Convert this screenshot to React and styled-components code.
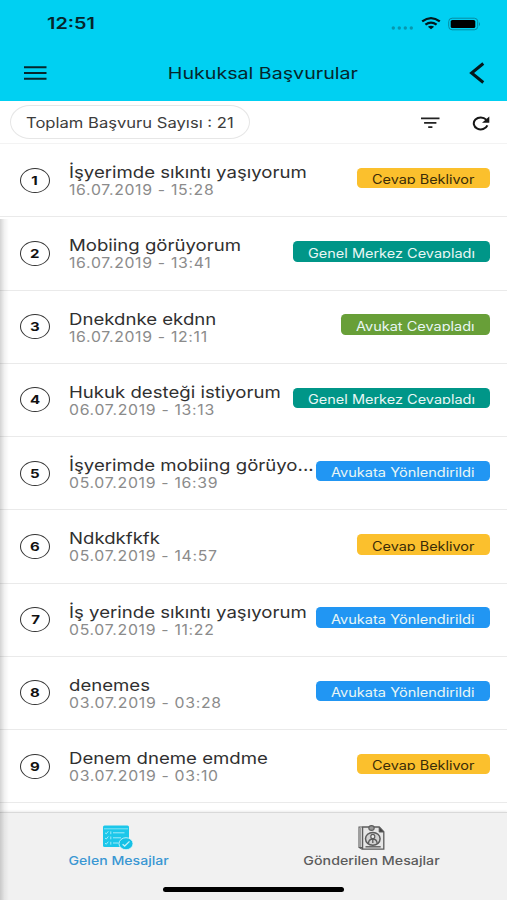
import React from "react";
import styled, { createGlobalStyle } from "styled-components";

const GlobalStyle = createGlobalStyle`
  * {
    box-sizing: border-box;
  }
  body {
    margin: 0;
    background: #ffffff;
    font-family: Inter, "Liberation Sans", sans-serif;
  }
`;

const Screen = styled.div`
  position: relative;
  display: flex;
  flex-direction: column;
  width: 507px;
  height: 900px;
  overflow: hidden;
  background: #ffffff;
`;

const Wide = styled.span`
  display: inline-block;
  white-space: nowrap;
  transform: scaleX(${(props) => props.$x || 1.18});
  transform-origin: ${(props) => props.$origin || "left"} center;
`;

const Top = styled.header`
  flex: none;
  height: 101px;
  background: #00d0f2;
`;

const StatusBar = styled.div`
  display: flex;
  align-items: center;
  justify-content: space-between;
  height: 47px;
  padding: 0 26px 0 46.5px;
`;

const Clock = styled.div`
  font-size: 15.5px;
  font-weight: 600;
  line-height: 20px;
  color: #06262c;
`;

const StatusIcons = styled.div`
  display: flex;
  align-items: center;
`;

const NavBar = styled.div`
  display: grid;
  grid-template-columns: 32px 1fr 38px;
  align-items: center;
  height: 52px;
  padding: 0 0 0 24px;
`;

const NavTitle = styled.h1`
  margin: 0;
  text-align: center;
  font-size: 16.5px;
  font-weight: 400;
  line-height: 20px;
  color: #06262c;
`;

const Toolbar = styled.div`
  flex: none;
  display: flex;
  align-items: center;
  height: 43px;
  padding: 0 17px 0 10px;
  border-bottom: 1px solid #f3f3f3;
`;

const Total = styled.div`
  width: 240px;
  height: 34px;
  margin-right: auto;
  padding-left: 15px;
  border: 1px solid #e6e6e6;
  border-radius: 20px / 17px;
  font-size: 14px;
  line-height: 33px;
  color: #3c3c3c;
`;

const List = styled.main`
  flex: none;
  height: 668px;
  overflow: hidden;
`;

const Row = styled.div`
  display: flex;
  align-items: center;
  height: 73.25px;
  padding: 0 17px 0 20px;
  border-bottom: 1px solid #eaeaea;
`;

const Number = styled.div`
  flex: none;
  width: 30px;
  height: 25px;
  border: 1.5px solid #333333;
  border-radius: 50%;
  text-align: center;
  font-size: 12px;
  font-weight: 700;
  line-height: 23px;
  color: #111111;
`;

const Info = styled.div`
  flex: 1;
  min-width: 0;
  padding-left: 19px;
`;

const Subject = styled.div`
  font-size: 16.5px;
  line-height: 20px;
  color: #303030;
`;

const DateText = styled.div`
  font-size: 14px;
  line-height: 16px;
  letter-spacing: 0.6px;
  color: #8b8b8b;
`;

const Badge = styled.div`
  flex: none;
  width: ${(props) => props.$width}px;
  height: 20.5px;
  margin-bottom: 4px;
  padding: 3.5px 15px 0;
  border-radius: 4.5px;
  background: ${(props) => props.$bg};
  color: ${(props) => props.$color || "#e9f6f5"};
`;

// fixed height cuts the descenders off
const BadgeText = styled.div`
  height: 13px;
  overflow: hidden;
  font-size: 12.5px;
  line-height: 17px;
`;

const TabBar = styled.nav`
  flex: none;
  display: grid;
  grid-template-columns: 1fr 1fr;
  height: 88px;
  border-top: 1px solid #d9d9d9;
  background: #f1f1f1;
  box-shadow: 0 -1px 2px rgba(0, 0, 0, 0.08);
`;

const Tab = styled.div`
  display: flex;
  flex-direction: column;
  align-items: center;
  padding: 12px 17px 0 0;
  font-size: 12px;
  font-weight: 500;
  line-height: 16px;
  color: ${(props) => (props.$active ? "#3a97d3" : "#5c5c5c")};

  svg {
    margin-bottom: 3px;
  }
`;

const HomeIndicator = styled.div`
  position: absolute;
  left: 163px;
  bottom: 8px;
  width: 181px;
  height: 5px;
  border-radius: 3px;
  background: #000000;
`;

const EdgeShadow = styled.div`
  position: absolute;
  top: 219px;
  left: 0;
  bottom: 0;
  width: 9px;
  background: linear-gradient(to right, rgba(0, 0, 0, 0.17), rgba(0, 0, 0, 0.05) 50%, rgba(0, 0, 0, 0));
`;

const STATUS = {
  waiting: { text: "Cevap Bekliyor", width: 133.5, bg: "#fbc02d", color: "#3a2c08", x: 1.155 },
  center: { text: "Genel Merkez Cevapladı", width: 197.5, bg: "#009688", x: 1.16 },
  lawyer: { text: "Avukat Cevapladı", width: 149, bg: "#689f38", x: 1.16 },
  forwarded: { text: "Avukata Yönlendirildi", width: 174, bg: "#2196f3", x: 1.165 },
};

const messages = [
  { title: "İşyerimde sıkıntı yaşıyorum", date: "16.07.2019 - 15:28", status: "waiting" },
  { title: "Mobiing görüyorum", date: "16.07.2019 - 13:41", status: "center" },
  { title: "Dnekdnke ekdnn", date: "16.07.2019 - 12:11", status: "lawyer" },
  { title: "Hukuk desteği istiyorum", date: "06.07.2019 - 13:13", status: "center" },
  { title: "İşyerimde mobiing görüyo...", date: "05.07.2019 - 16:39", status: "forwarded" },
  { title: "Ndkdkfkfk", date: "05.07.2019 - 14:57", status: "waiting" },
  { title: "İş yerinde sıkıntı yaşıyorum", date: "05.07.2019 - 11:22", status: "forwarded" },
  { title: "denemes", date: "03.07.2019 - 03:28", status: "forwarded" },
  { title: "Denem dneme emdme", date: "03.07.2019 - 03:10", status: "waiting" },
];

const SignalIcon = () => (
  <svg width="90" height="16" viewBox="0 0 90 16">
    <g fill="#0797ae">
      <circle cx="2.3" cy="12" r="1.7" />
      <circle cx="8.3" cy="12" r="1.7" />
      <circle cx="14.3" cy="12" r="1.7" />
      <circle cx="20.3" cy="12" r="1.7" />
    </g>
    <g fill="none" stroke="#02181c" strokeWidth="2.3">
      <path d="M31.2 5.4 Q40 -1.2 48.8 5.4" />
      <path d="M34.4 8.6 Q40 4.6 45.6 8.6" />
    </g>
    <path d="M36.9 10.8 Q40 8.8 43.1 10.8 L40 13.3z" fill="#02181c" />
    <rect x="57.7" y="2.2" width="29" height="11.6" rx="3.4" fill="none" stroke="#078ca2" />
    <rect x="59.7" y="4" width="24.6" height="8" rx="1.6" fill="#000" />
    <path d="M88 5.9 Q90 8 88 10.1z" fill="#078ca2" />
  </svg>
);

const MenuIcon = () => (
  <svg width="23" height="14" viewBox="0 0 23 14" stroke="#06262c" strokeWidth="2.1">
    <path d="M0 1.3h22.5M0 7h22.5M0 12.7h22.5" />
  </svg>
);

const BackIcon = () => (
  <svg width="16" height="22" viewBox="0 0 16 22" fill="none" stroke="#04181c" strokeWidth="3">
    <path d="M14.3 1.5 L2.6 11 L14.3 20.5" />
  </svg>
);

const FilterIcon = () => (
  <svg width="19" height="12" viewBox="0 0 19 12" stroke="#222" strokeWidth="1.8">
    <path d="M0 1.4h18.5M3.1 5.8h12.3M7.2 10.2h4.2" />
  </svg>
);

const RefreshIcon = () => (
  <svg width="18" height="15" viewBox="0 0 18 15">
    <path d="M14.2 3.6 A7 6 0 1 0 15.4 9.4" fill="none" stroke="#161616" strokeWidth="2" />
    <path d="M17.3 0.6 V6.8 H10z" fill="#161616" />
  </svg>
);

const InboxIcon = () => (
  <svg width="30" height="25" viewBox="0 0 30 25">
    <rect x="0" y="0.5" width="26" height="21.5" rx="1.5" fill="#1cc7ea" />
    <path d="M1 3.8h24" stroke="#8fe6f6" strokeWidth="0.9" />
    <g stroke="#a4ebf8" fill="none" strokeWidth="1">
      <path d="M2 7.8l1.3 1 2-2.5M2 13l1.3 1 2-2.5M2 18.2l1.3 1 2-2.5" />
      <path d="M7.8 6.4v2.8M7.8 11.5v2.8M7.8 16.8v2.8" />
      <path d="M10 7.8h11.5M10 12.8h8M10 18h5.5" />
    </g>
    <ellipse cx="23" cy="18.7" rx="7" ry="6" fill="#16c1e6" stroke="#e5f7fa" strokeWidth="0.8" />
    <path d="M19.6 19.2l2.1 1.8 4.8-4.6" stroke="#c3f1fa" strokeWidth="1.3" fill="none" />
  </svg>
);

const SentIcon = () => (
  <svg width="27" height="25" viewBox="0 0 27 25" fill="none" stroke="#5c5c5c">
    <path d="M4 2H1v20.5h3M1.2 22.5l3 1.7" strokeWidth="1.1" />
    <path d="M2.6 3v19" stroke="#a0a0a0" strokeWidth="1.5" />
    <path d="M4.6 2h16.6l4.6 4.8v17.4H4.6z" strokeWidth="1.3" fill="#e6e6e6" />
    <path d="M21.2 2v5h4.6z" fill="#444" />
    <ellipse cx="14.8" cy="13.8" rx="7.3" ry="6.4" strokeWidth="1.5" fill="#d2d2d2" />
    <ellipse cx="14.8" cy="11.5" rx="2" ry="2.2" strokeWidth="1.2" fill="#eee" />
    <path d="M10.5 18.3c.2-3.2 2-4.3 4.3-4.3s4.1 1.1 4.3 4.3M14.8 14v4" strokeWidth="1.3" />
    <path d="M7.5 21.8h15.2" strokeWidth="1.4" />
    <ellipse cx="13.5" cy="3" rx="2.7" ry="2.4" strokeWidth="1.1" fill="#999" />
  </svg>
);

const ToolIcons = styled.div`
  display: flex;
  align-items: center;
  gap: 32.5px;
  padding-top: 2px;
`;

const MessageRow = ({ item, index }) => {
  const status = STATUS[item.status];
  return (
    <Row>
      <Number>
        <Wide $x={1.25} $origin="center">
          {index + 1}
        </Wide>
      </Number>
      <Info>
        <Subject>
          <Wide $x={1.127}>{item.title}</Wide>
        </Subject>
        <DateText>
          <Wide $x={1.13}>{item.date}</Wide>
        </DateText>
      </Info>
      <Badge $width={status.width} $bg={status.bg} $color={status.color}>
        <BadgeText>
          <Wide $x={status.x}>{status.text}</Wide>
        </BadgeText>
      </Badge>
    </Row>
  );
};

const App = () => {
  return (
    <>
      <GlobalStyle />
      <Screen>
        <Top>
          <StatusBar>
            <Clock>
              <Wide $x={1.28}>12:51</Wide>
            </Clock>
            <StatusIcons>
              <SignalIcon />
            </StatusIcons>
          </StatusBar>
          <NavBar>
            <MenuIcon />
            <NavTitle>
              <Wide $x={1.19} $origin="center">
                Hukuksal Başvurular
              </Wide>
            </NavTitle>
            <BackIcon />
          </NavBar>
        </Top>
        <Toolbar>
          <Total>
            <Wide $x={1.185}>Toplam Başvuru Sayısı : 21</Wide>
          </Total>
          <ToolIcons>
            <FilterIcon />
            <RefreshIcon />
          </ToolIcons>
        </Toolbar>
        <List>
          {messages.map((item, index) => (
            <MessageRow key={index} item={item} index={index} />
          ))}
        </List>
        <TabBar>
          <Tab $active>
            <InboxIcon />
            <Wide $x={1.175} $origin="center">
              Gelen Mesajlar
            </Wide>
          </Tab>
          <Tab>
            <SentIcon />
            <Wide $x={1.185} $origin="center">
              Gönderilen Mesajlar
            </Wide>
          </Tab>
        </TabBar>
        <EdgeShadow />
        <HomeIndicator />
      </Screen>
    </>
  );
};

export default App;
